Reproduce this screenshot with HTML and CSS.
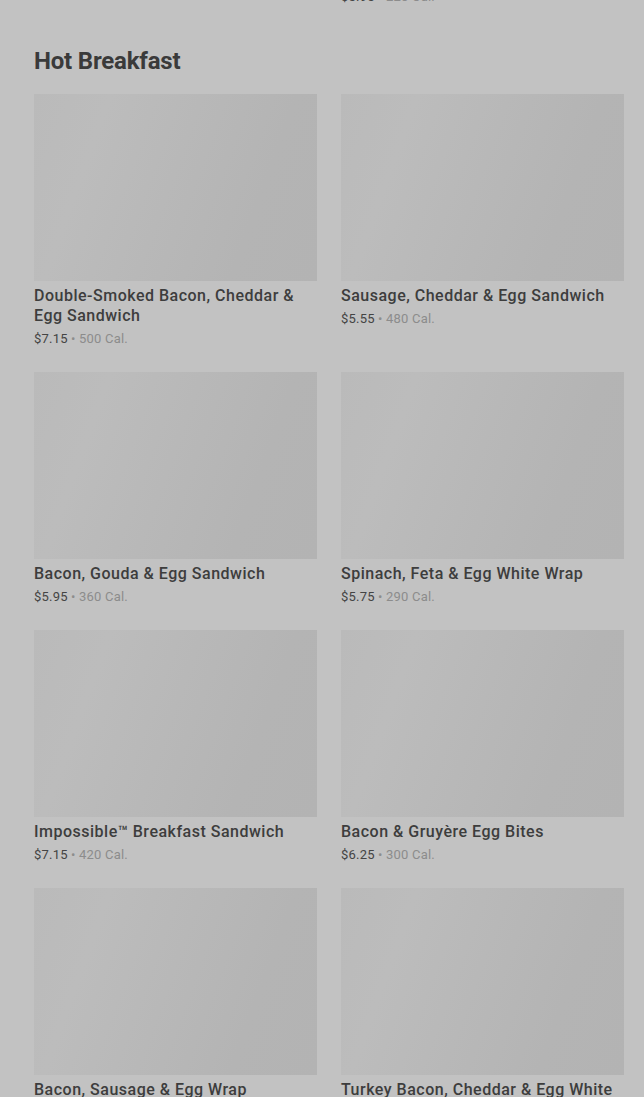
FILE: index.html
```html
<!DOCTYPE html>
<html lang="en">
<head>
  <meta charset="UTF-8">
  <title>Menu - Hot Breakfast</title>
  <meta name="viewport" content="width=device-width, initial-scale=1.0">
  <link rel="stylesheet" href="styles.css">
</head>
<body>

<div class="page">

  <!-- end of previous section, scrolled mostly out of view -->
  <section class="section">
    <div class="grid">
      <div class="item">
        <div class="thumb"></div>
        <h3 class="name">Butter Croissant</h3>
        <p class="meta"><span class="price">$3.45</span> &bull; <span class="cal">260 Cal.</span></p>
      </div>
      <div class="item">
        <div class="thumb"></div>
        <h3 class="name">Cheese &amp; Fruit Protein Box with Extra Grapes</h3>
        <p class="meta"><span class="price">$5.95</span> &bull; <span class="cal">220 Cal.</span></p>
      </div>
    </div>
  </section>

  <section class="section">
    <h2 class="section-title">Hot Breakfast</h2>
    <div class="grid">
      <div class="item">
        <div class="thumb"></div>
        <h3 class="name">Double-Smoked Bacon, Cheddar &amp; Egg Sandwich</h3>
        <p class="meta"><span class="price">$7.15</span> &bull; <span class="cal">500 Cal.</span></p>
      </div>
      <div class="item">
        <div class="thumb"></div>
        <h3 class="name">Sausage, Cheddar &amp; Egg Sandwich</h3>
        <p class="meta"><span class="price">$5.55</span> &bull; <span class="cal">480 Cal.</span></p>
      </div>
      <div class="item">
        <div class="thumb"></div>
        <h3 class="name">Bacon, Gouda &amp; Egg Sandwich</h3>
        <p class="meta"><span class="price">$5.95</span> &bull; <span class="cal">360 Cal.</span></p>
      </div>
      <div class="item">
        <div class="thumb"></div>
        <h3 class="name">Spinach, Feta &amp; Egg White Wrap</h3>
        <p class="meta"><span class="price">$5.75</span> &bull; <span class="cal">290 Cal.</span></p>
      </div>
      <div class="item">
        <div class="thumb"></div>
        <h3 class="name">Impossible&trade; Breakfast Sandwich</h3>
        <p class="meta"><span class="price">$7.15</span> &bull; <span class="cal">420 Cal.</span></p>
      </div>
      <div class="item">
        <div class="thumb"></div>
        <h3 class="name">Bacon &amp; Gruyère Egg Bites</h3>
        <p class="meta"><span class="price">$6.25</span> &bull; <span class="cal">300 Cal.</span></p>
      </div>
      <div class="item">
        <div class="thumb"></div>
        <h3 class="name">Bacon, Sausage &amp; Egg Wrap</h3>
        <p class="meta"><span class="price">$5.95</span> &bull; <span class="cal">420 Cal.</span></p>
      </div>
      <div class="item">
        <div class="thumb"></div>
        <h3 class="name">Turkey Bacon, Cheddar &amp; Egg White Sandwich</h3>
        <p class="meta"><span class="price">$5.95</span> &bull; <span class="cal">230 Cal.</span></p>
      </div>
    </div>
  </section>

</div>

</body>
</html>
```

FILE: styles.css
```css
body {
  margin: 0;
  background: #c2c2c2;
  font-family: Roboto, 'Liberation Sans', sans-serif;
  color: #3b3b3b;
  overflow: hidden;
}

.page {
  /* page is scrolled: the previous section is mostly above the fold */
  margin-top: -248px;
  padding: 0 20px 0 34px;
}

.section + .section {
  margin-top: 38px;
}

.section-title {
  margin: 0 0 17px;
  font-size: 24px;
  line-height: 32px;
  font-weight: 700;
  letter-spacing: -0.2px;
  color: #3a3a3a;
}

.grid {
  display: grid;
  grid-template-columns: repeat(2, 283px);
  column-gap: 24px;
  row-gap: 23px;
  align-items: start;
}

.thumb {
  height: 187px;
  background: linear-gradient(110deg, #bababa 0%, #bcbcbc 22%, #b8b8b8 48%, #b4b4b4 75%, #b3b3b3 100%);
}

.name {
  margin: 5px 0 0;
  font-size: 16px;
  line-height: 20px;
  font-weight: 500;
  letter-spacing: 0.5px;
  color: #3d3d3d;
}

.meta {
  margin: 3px 0 0;
  font-size: 13px;
  line-height: 20px;
  letter-spacing: 0.2px;
  color: #8d8d8d;
}

.price {
  color: #444;
}

.cal {
  color: #8c8c8c;
}
```
